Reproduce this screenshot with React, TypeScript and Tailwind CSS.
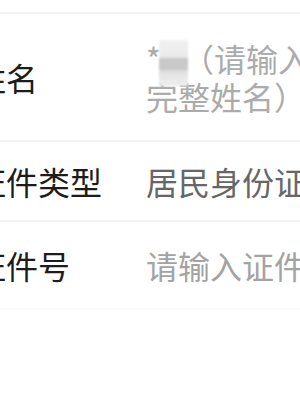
export default function App() {
  const font = { fontFamily: '"Noto Sans CJK SC", "Noto Sans", sans-serif' };

  return (
    <main
      className="w-[300px] h-[400px] overflow-hidden bg-white text-[32px]"
      style={font}
    >
      <div className="h-[12px]" />
      <div className="h-[2px] bg-[#f2f2f2]" />

      {/* 姓名 */}
      <div className="flex h-[126px] items-center">
        <div className="ml-[-26px] w-[172px] shrink-0 text-[#1c1c1c]">姓名</div>
        <div className="w-[175px] shrink-0 leading-[38px] text-[#ababab]">
          <span>*</span>
          <span className="ml-[-2px] inline-block -my-[12px] h-[46px] w-[29px] align-middle blur-[1px] bg-[linear-gradient(to_bottom,#f1f1f1_0%,#ebebeb_36%,#c8c8c8_42%,#c8c8c8_62%,#e2e2e2_70%,#efefef_100%)]" />
          <span className="ml-[-6px]">（请输入完整姓名）</span>
        </div>
      </div>
      <div className="h-[2px] bg-[#f2f2f2]" />

      {/* 证件类型 */}
      <div className="flex h-[78px] items-center">
        <div className="ml-[-26px] w-[172px] shrink-0 text-[#1c1c1c]">证件类型</div>
        <div className="whitespace-nowrap text-[#666666]">居民身份证</div>
      </div>
      <div className="h-[2px] bg-[#f2f2f2]" />

      {/* 证件号 */}
      <div className="flex h-[86px] items-center">
        <div className="ml-[-26px] w-[172px] shrink-0 text-[#1c1c1c]">证件号</div>
        <div className="whitespace-nowrap text-[#a3a3a3]">请输入证件号</div>
      </div>
      <div className="h-[2px] bg-[#fafafa]" />
    </main>
  );
}
